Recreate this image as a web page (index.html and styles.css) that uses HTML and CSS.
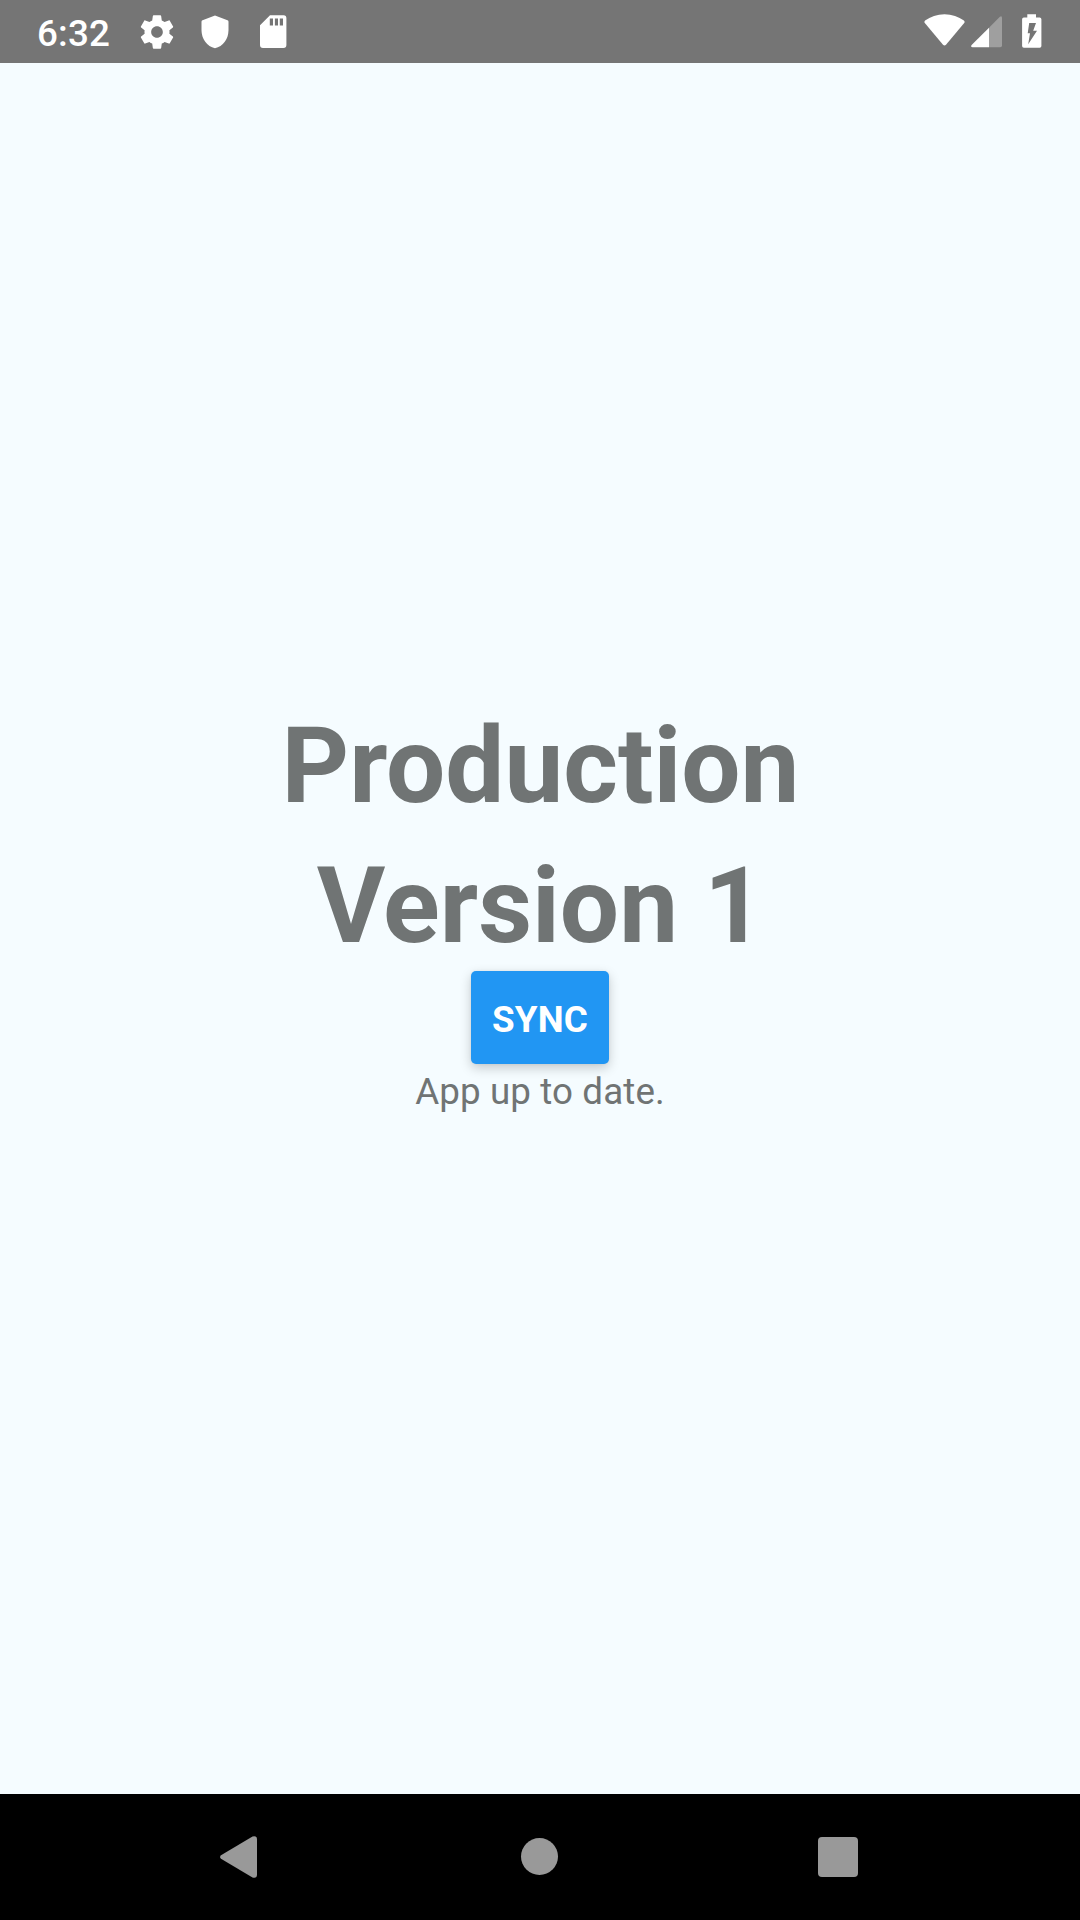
FILE: index.html
```html
<!DOCTYPE html>
<html lang="en">
<head>
<meta charset="utf-8">
<title>Production Version 1</title>
<link rel="stylesheet" href="styles.css">
</head>
<body>
<div class="screen">
  <header class="status-bar">
    <div class="status-group notifications">
      <span class="clock">6:32</span>
      <svg class="status-icon gear" viewBox="0 0 24 24"><path d="M19.43 12.98c.04-.32.07-.64.07-.98s-.03-.66-.07-.98l2.11-1.65c.19-.15.24-.42.12-.64l-2-3.46c-.12-.22-.39-.3-.61-.22l-2.49 1c-.52-.4-1.08-.73-1.69-.98l-.38-2.65C14.46 2.18 14.25 2 14 2h-4c-.25 0-.46.18-.49.42l-.38 2.65c-.61.25-1.17.59-1.69.98l-2.49-1c-.23-.09-.49 0-.61.22l-2 3.46c-.13.22-.07.49.12.64l2.11 1.65c-.04.32-.07.65-.07.98s.03.66.07.98l-2.11 1.65c-.19.15-.24.42-.12.64l2 3.46c.12.22.39.3.61.22l2.49-1c.52.4 1.08.73 1.69.98l.38 2.65c.03.24.24.42.49.42h4c.25 0 .46-.18.49-.42l.38-2.65c.61-.25 1.17-.59 1.69-.98l2.49 1c.23.09.49 0 .61-.22l2-3.46c.12-.22.07-.49-.12-.64l-2.11-1.65zM12 15.500c-1.930 0-3.500-1.570-3.500-3.500s1.570-3.500 3.500-3.500 3.500 1.570 3.500 3.500-1.570 3.500-3.500 3.500z"/></svg>
      <svg class="status-icon shield" viewBox="0 0 28 34"><path d="M14 .5 26.500 5.200Q27.500 5.600 27.500 6.700V15C27.500 24 22 31.500 14 33.300 6 31.500.5 24 .5 15V6.700Q.5 5.600 1.500 5.200Z"/></svg>
      <svg class="status-icon sd-card" viewBox="0 0 27 34"><path fill-rule="evenodd" d="M10 .3H23.600A3 3 0 0 1 26.400 3.300V30.100A3 3 0 0 1 23.400 33.100H3A3 3 0 0 1 0 30.100V10.200ZM9.800 3.600V10.500H13V3.600ZM14.900 3.600V10.500H18V3.600ZM19.800 3.600V10.500H23V3.600Z"/></svg>
    </div>
    <div class="status-group system">
      <svg class="status-icon wifi" viewBox="0 0 41 33"><path d="M20.500.2C28 .2 34.500 2.500 39.900 6.600Q41.200 7.700 40.200 9L22 30.700Q20.500 32.200 19 30.700L.8 9Q-.2 7.700 1.100 6.600C6.500 2.500 13 .2 20.500.2Z"/></svg>
      <svg class="status-icon signal" viewBox="0 0 32 32"><path class="signal-empty" d="M18 11.700 28.600 1Q31-.8 31 2V29.400Q31 31.200 29.200 31.200H18Z"/><path d="M18 11.700V31.200H1.700Q-.8 31 .6 29Z"/></svg>
      <svg class="status-icon battery" viewBox="0 0 20 34"><path fill-rule="evenodd" d="M5.300.2H14V3.500H17.700Q19.400 3.500 19.400 5.300V32Q19.400 33.700 17.700 33.700H1.900Q.1 33.700.1 32V5.300Q.1 3.500 1.900 3.500H5.300ZM7.200 9 5.700 19.200H8L6.200 30.300 15 16.800H11.200L14 9Z"/></svg>
    </div>
  </header>
  <main class="content">
    <h1 class="title">Production<br>Version 1</h1>
    <button class="sync-button" type="button">SYNC</button>
    <p class="sync-status">App up to date.</p>
  </main>
  <nav class="navigation-bar">
    <svg class="nav-icon back" viewBox="0 0 38 42"><path d="M1 19.200 32.500.6Q37 -.7 37 3.500V38.500Q37 42.700 32.500 41.400L1 22.800Q-.9 21 1 19.200Z"/></svg>
    <span class="nav-home"></span>
    <span class="nav-recent"></span>
  </nav>
</div>
</body>
</html>
```

FILE: styles.css
```css
* { box-sizing: border-box; }

body {
  margin: 0;
  font-family: Roboto, "Liberation Sans", sans-serif;
}

.screen {
  display: flex;
  flex-direction: column;
  width: 1080px;
  height: 1920px;
  background: #f5fcff;
  overflow: hidden;
}

.status-bar {
  display: flex;
  flex: none;
  justify-content: space-between;
  height: 63px;
  padding: 0 38px 0 37px;
  background: #757575;
  color: #fff;
}

.status-group {
  display: flex;
  align-items: flex-start;
}

.clock {
  width: 100px;
  padding-top: 12px;
  font-size: 36.75px;
  font-weight: 500;
  line-height: 43px;
  letter-spacing: 0.2px;
}

.status-icon {
  display: block;
  flex: none;
  fill: #fff;
}

.gear { width: 40px; height: 40px; margin-top: 11.5px; }
.shield { width: 28px; height: 34px; margin: 15px 0 0 24px; }
.sd-card { width: 27px; height: 34px; margin: 15px 0 0 31px; }
.wifi { width: 41px; height: 33px; margin-top: 14px; }
.signal { width: 32px; height: 32px; margin: 16px 0 0 6px; }
.signal-empty { fill: #9f9f9f; }
.battery { width: 20px; height: 34px; margin: 14px 0 0 19px; }

.content {
  display: flex;
  flex: 1;
  flex-direction: column;
  align-items: center;
  padding-top: 634px;
  color: #707474;
}

.title {
  margin: 0 0 -6px;
  padding-left: 1px;
  font-size: 105px;
  font-weight: 700;
  line-height: 140px;
  text-align: center;
}

.sync-button {
  width: 138px;
  height: 93px;
  margin: 0;
  padding: 3px 0 0;
  border: 0;
  border-radius: 5px;
  background: #2196f3;
  box-shadow: 0 4px 12px rgba(0, 0, 0, 0.2), 0 0 3px rgba(0, 0, 0, 0.06);
  color: #fff;
  font: 700 36.75px/43px Roboto, sans-serif;
  letter-spacing: 0.1px;
}

.sync-status {
  margin: 2px 0 0;
  font-size: 36.75px;
  line-height: 52px;
  letter-spacing: 0.1px;
}

.navigation-bar {
  display: flex;
  flex: none;
  align-items: center;
  height: 126px;
  padding-left: 220px;
  background: #000;
}

.nav-icon { fill: #999; }
.back { width: 38px; height: 42px; }
.nav-home {
  width: 37px;
  height: 37px;
  margin: 0 0 1px 263px;
  border-radius: 50%;
  background: #999;
}
.nav-recent {
  width: 40px;
  height: 40px;
  margin-left: 260px;
  border-radius: 4px;
  background: #999;
}
```
